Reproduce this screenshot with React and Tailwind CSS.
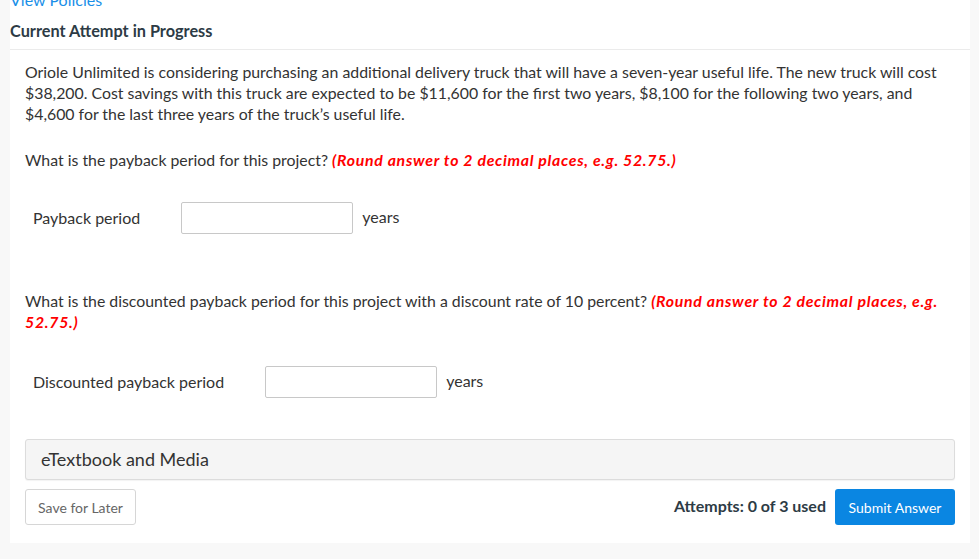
import React from 'react';

const Answer = ({ label }) => (
  <div className="flex items-center pl-2">
    <span className="mr-[41px] text-[16px] text-[#333]">{label}</span>
    <input
      type="text"
      className="h-[32px] w-[172px] rounded-[2px] border border-[#c8c8c8] bg-white outline-none"
    />
    <span className="ml-[9px] -mt-[3px] text-[16px] text-[#333]">years</span>
  </div>
);

const Hint = () => (
  <span className="font-bold italic tracking-[0.7px] text-[#ff0000]">
    (Round answer to 2 decimal places, e.g. 52.75.)
  </span>
);

const App = () => {
  return (
    <div className="min-h-screen bg-[#f8f8f8] font-['Lato','Liberation_Sans',sans-serif]">
      <div className="ml-[10px] w-[960px] bg-white pb-[18px]">
        <div className="flex h-[50px] flex-col border-b border-[#ebebeb]">
          <div className="-mt-[10px] text-[16px] leading-[20px] text-[#1a8fe8]">View Policies</div>
          <h2 className="mt-[10px] text-[16.3px] font-bold leading-[22px] text-[#2d3b45]">
            Current Attempt in Progress
          </h2>
        </div>

        <div className="px-[15px] pt-[11px]">
          <p className="text-[15.85px] leading-[21px] text-[#333]">
            Oriole Unlimited is considering purchasing an additional delivery truck that will have a seven-year useful life. The new truck will cost $38,200. Cost savings with this truck are expected to be $11,600 for the first two years, $8,100 for the following two years, and $4,600 for the last three years of the truck’s useful life.
          </p>
          <p className="mt-[25px] text-[15.85px] leading-[21px] text-[#333]">
            What is the payback period for this project? <Hint />
          </p>

          <div className="mt-[32px]">
            <Answer label="Payback period" />
          </div>

          <p className="mt-[56px] text-[15.85px] leading-[21px] text-[#333]">
            What is the discounted payback period for this project with a discount rate of 10 percent? <Hint />
          </p>

          <div className="mt-[34px]">
            <Answer label="Discounted payback period" />
          </div>

          <div className="mt-[41px] flex h-[41px] items-center rounded-[3px] border border-[#dcdcdc] bg-[#f5f5f5] px-[15px] shadow-[0_1px_1px_rgba(0,0,0,0.05)]">
            <span className="text-[18px] text-[#333]">eTextbook and Media</span>
          </div>

          <div className="mt-[9px] flex items-center justify-between">
            <button className="h-[36px] w-[111px] rounded-[3px] border border-[#d6d6d6] bg-white text-[14px] text-[#666]">
              Save for Later
            </button>
            <div className="flex items-center gap-[9px]">
              <span className="-mt-[3px] text-[16px] font-bold text-[#2d3b45]">Attempts: 0 of 3 used</span>
              <button className="h-[36px] w-[120px] rounded-[3px] bg-[#0a86e2] text-[14px] text-white">
                Submit Answer
              </button>
            </div>
          </div>
        </div>
      </div>
    </div>
  );
};

export default App;
